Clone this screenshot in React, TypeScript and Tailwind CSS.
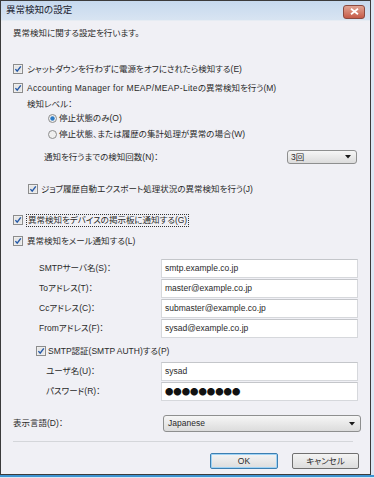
import React from "react";

const FONT = "font-['Liberation_Sans','Noto_Sans_CJK_JP',sans-serif] [font-feature-settings:'palt']";

const Check = () => (
  <svg width="10" height="10" viewBox="0 0 10 10" className="shrink-0">
    <rect x="0.5" y="0.5" width="9" height="9" fill="#f4f4f4" stroke="#8c8c8c" />
    <rect x="1.5" y="1.5" width="7" height="7" fill="#e6e6e6" />
    <path d="M2.4 5.1 L4.2 7.2 L7.8 2.4" stroke="#2458a8" strokeWidth="1.4" fill="none" />
  </svg>
);

const Radio = ({ on }: { on?: boolean }) => (
  <svg width="9" height="9" viewBox="0 0 9 9" className="shrink-0">
    <circle cx="4.5" cy="4.5" r="4" fill="#efefef" stroke="#8c8c8c" />
    {on && <circle cx="4.5" cy="4.5" r="2.2" fill="#2b7ac6" />}
  </svg>
);

const Arrow = () => (
  <svg width="6" height="4" viewBox="0 0 6 4" className="shrink-0">
    <path d="M0 0 H6 L3 3.5 Z" fill="#1a1a1a" />
  </svg>
);

const Input = ({ value, pw }: { value: string; pw?: boolean }) => (
  <div className="w-[197px] h-[19px] bg-white border border-[#d6d8dc] border-t-[#c4c6ca] flex items-center pl-[3px]">
    {pw ? (
      <span className="font-['Noto_Sans_CJK_JP',sans-serif] [font-feature-settings:normal] text-[8.4px] leading-none text-[#111]">●●●●●●●●●</span>
    ) : (
      <span className="leading-none">{value}</span>
    )}
  </div>
);

export default function App() {
  return (
    <div className={`w-[374px] h-[478px] bg-[#dbe7f4] flex flex-col ${FONT} text-[8.5px] text-[#2a2a2a]`}>
      <div className="w-[371px] h-[475px] border border-[#3b3b3b] flex flex-col bg-[#f0f0f5]">
        {/* title bar */}
        <div className="h-[20px] shrink-0 bg-linear-to-b from-[#c6d9ee] to-[#d8e4f2] border-b border-[#e6ecf3] flex items-center justify-between pl-[5px] pr-[5px]">
          <span className="text-[9.5px] text-[#1c2430]">異常検知の設定</span>
          <div className="w-[22px] h-[14px] mt-[2px] rounded-[3px] border border-[#8a4a40] bg-linear-to-b from-[#e0a494] to-[#c55a48] flex items-center justify-center">
            <svg width="9" height="7" viewBox="0 0 9 7">
              <path d="M1 0.8 L8 6.2 M8 0.8 L1 6.2" stroke="#ffffff" strokeWidth="1.8" />
            </svg>
          </div>
        </div>

        <div className="flex flex-col pl-[12px]">
          <div className="h-[14px] mt-[5px] flex items-center">異常検知に関する設定を行います。</div>

          <div className="h-[14px] mt-[22px] flex items-center gap-[4px]">
            <Check />
            <span>シャットダウンを行わずに電源をオフにされたら検知する(E)</span>
          </div>
          <div className="h-[14px] mt-[5px] flex items-center gap-[4px]">
            <Check />
            <span>
              <span className="tracking-[0.3px]">Accounting Manager for MEAP/MEAP-Lite</span>の異常検知を行う(M)
            </span>
          </div>
          <div className="h-[14px] mt-[2px] flex items-center pl-[14px]">検知レベル：</div>
          <div className="h-[14px] flex items-center gap-[2px] pl-[35px]">
            <Radio on />
            <span>停止状態のみ(O)</span>
          </div>
          <div className="h-[14px] mt-[2px] flex items-center gap-[2px] pl-[35px]">
            <Radio />
            <span>停止状態、または履歴の集計処理が異常の場合(W)</span>
          </div>
          <div className="h-[14px] mt-[9px] flex items-center pl-[31px]">
            <span className="w-[243px]">通知を行うまでの検知回数(N)：</span>
            <div className="w-[70px] h-[14px] border border-[#8e8f8f] rounded-[3px] bg-linear-to-b from-[#f6f6f6] to-[#dcdcdc] flex items-center justify-between pl-[3px] pr-[5px]">
              <span className="leading-none">3回</span>
              <Arrow />
            </div>
          </div>
          <div className="h-[14px] mt-[18px] flex items-center gap-[3px] pl-[15px]">
            <Check />
            <span>ジョブ履歴自動エクスポート処理状況の異常検知を行う(J)</span>
          </div>
          <div className="h-[14px] mt-[17px] flex items-center gap-[3px]">
            <Check />
            <span className="border border-dotted border-[#333] px-[1px] leading-[11px]">異常検知をデバイスの掲示板に通知する(G)</span>
          </div>
          <div className="h-[14px] mt-[7px] flex items-center gap-[4px]">
            <Check />
            <span>異常検知をメール通知する(L)</span>
          </div>

          <div className="flex flex-col mt-[10px] pl-[26px]">
            {[
              ["SMTPサーバ名(S)：", "smtp.example.co.jp"],
              ["Toアドレス(T)：", "master@example.co.jp"],
              ["Ccアドレス(C)：", "submaster@example.co.jp"],
              ["Fromアドレス(F)：", "sysad@example.co.jp"],
            ].map(([l, v]) => (
              <div key={l} className="h-[20px] flex items-center">
                <span className="w-[122px]">{l}</span>
                <Input value={v} />
              </div>
            ))}
          </div>

          <div className="h-[14px] mt-[6px] flex items-center gap-[2px] pl-[23px]">
            <Check />
            <span>SMTP認証(SMTP AUTH)する(P)</span>
          </div>
          <div className="flex flex-col mt-[3px] pl-[33px]">
            <div className="h-[20px] flex items-center">
              <span className="w-[115px]">ユーザ名(U)：</span>
              <Input value="sysad" />
            </div>
            <div className="h-[20px] flex items-center">
              <span className="w-[115px]">パスワード(R)：</span>
              <Input value="" pw />
            </div>
          </div>

          <div className="h-[17px] mt-[14px] flex items-center">
            <span className="w-[150px]">表示言語(D)：</span>
            <div className="w-[198px] h-[17px] border border-[#8e8f8f] rounded-[3px] bg-linear-to-b from-[#f6f6f6] to-[#dcdcdc] flex items-center justify-between pl-[4px] pr-[5px]">
              <span className="leading-none">Japanese</span>
              <Arrow />
            </div>
          </div>

          <div className="mt-[9px] w-[340px] h-[2px] border-t border-[#d4d6da] border-b-white" />

          <div className="mt-[10px] flex justify-end w-[346px] gap-[14px]">
            <div className="w-[68px] h-[16px] rounded-[2px] border border-[#3c7fb1] bg-linear-to-b from-[#f4f4f4] to-[#dddddd] shadow-[inset_0_0_0_1px_#9fd3f5] flex items-center justify-center">
              OK
            </div>
            <div className="w-[67px] h-[16px] rounded-[2px] border border-[#707070] bg-linear-to-b from-[#f4f4f4] to-[#dddddd] flex items-center justify-center">
              キャンセル
            </div>
          </div>
        </div>
      </div>
      <div className="w-[374px] h-[2px] bg-[#3d95d3]" />
    </div>
  );
}
